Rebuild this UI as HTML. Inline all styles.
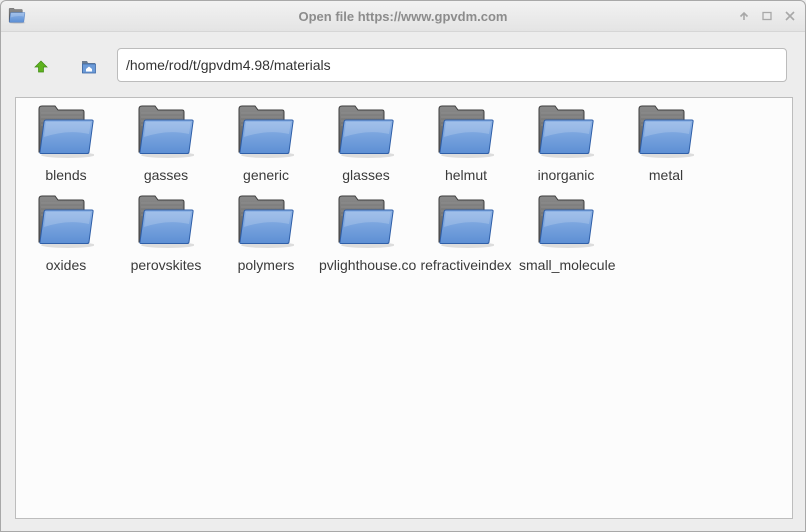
<!DOCTYPE html>
<html><head><style>
*{margin:0;padding:0;box-sizing:border-box}
body{width:806px;height:532px;overflow:hidden;background:#ededed;font-family:"Liberation Sans","DejaVu Sans",sans-serif;position:relative}
.win{position:absolute;left:0;top:0;width:806px;height:532px;border:1px solid #a8a8a8;border-radius:6px 6px 0 0;background:#ededed}
.title{position:absolute;left:0;top:0;width:804px;height:31px;background:linear-gradient(#f2f2f2,#e4e4e4);border-bottom:1px solid #d6d6d6;border-radius:6px 6px 0 0}
.title .t{position:absolute;left:0;right:0;top:8px;text-align:center;font-size:13px;font-weight:bold;color:#8c8c8c}
.path{position:absolute;left:116px;top:47px;width:670px;height:34px;background:#fff;border:1px solid #bcbcbc;border-radius:4px;font-size:14px;color:#333;padding:8px 0 0 8px}
.area{position:absolute;left:14px;top:96px;width:778px;height:422px;background:#fcfcfc;border:1px solid #bdbdbd}
.cell{position:absolute;width:100px;height:90px;overflow:hidden;text-align:center}
.cell svg{position:absolute;left:22px;top:7px}
.cell span{position:absolute;top:69px;left:0;width:100px;white-space:nowrap;font-size:14px;color:#3a3a3a;overflow:hidden}
</style></head><body>
<svg width="0" height="0" style="position:absolute">
<defs>
<linearGradient id="gb" x1="0" y1="0" x2="0" y2="1"><stop offset="0" stop-color="#8a8a8a"/><stop offset="1" stop-color="#555"/></linearGradient>
<linearGradient id="gf" x1="0" y1="0" x2="0" y2="1"><stop offset="0" stop-color="#8fb4e6"/><stop offset="1" stop-color="#5d8fd4"/></linearGradient>
<symbol id="fold" viewBox="0 0 56 54">
<ellipse cx="30" cy="50" rx="27" ry="3" fill="#000" opacity=".12"/>
<path d="M1 4 Q1 1 4 1 H17 L20 5 H44 Q46 5 46 7 V47 H1 Z" fill="url(#gb)" stroke="#3d3d3d" stroke-width="1"/>
<path d="M3 8 H44 M3 12 H44 M3 16 H44 M3 20 H44" stroke="#9a9a9a" stroke-width=".6"/>
<path d="M8 15 H54 Q55.5 15 55 17 L51 47 Q50.8 48.5 49 48.5 H3 Q1.5 48.5 2 47 L6 17 Q6.3 15 8 15 Z" fill="url(#gf)" stroke="#2f5fa8" stroke-width="1"/>
<path d="M8 17 H53 L51 29 Q30 24 6 32 Z" fill="#fff" opacity=".18"/>
</symbol>
</defs></svg>
<div class="win">
<div class="title">
<svg style="position:absolute;left:7px;top:7px" width="18" height="16" viewBox="0 0 56 54"><use href="#fold"/></svg>
<div class="t">Open file https://www.gpvdm.com</div>
<svg style="position:absolute;left:738px;top:10px" width="10" height="10"><path d="M5 9V2M1.5 5.5L5 2L8.5 5.5" stroke="#a8a8a8" stroke-width="1.6" fill="none"/></svg>
<svg style="position:absolute;left:761px;top:10px" width="10" height="10"><rect x="1" y="1.5" width="8" height="7" stroke="#a8a8a8" stroke-width="1.3" fill="none"/></svg>
<svg style="position:absolute;left:784px;top:10px" width="10" height="10"><path d="M1 1L9 9M9 1L1 9" stroke="#a8a8a8" stroke-width="1.6"/></svg>
</div>
<svg style="position:absolute;left:33px;top:59px" width="14" height="13"><path d="M7 1L13 7H9.5V12H4.5V7H1Z" fill="#5fb31f" stroke="#3f8a12" stroke-width=".7"/></svg>
<svg style="position:absolute;left:80px;top:58px" width="16" height="16" viewBox="0 0 16 16"><path d="M1 2H6L7 4H14V14H1Z" fill="#6b7d92"/><rect x="1.5" y="5" width="13" height="9" fill="#6c9bd8" stroke="#3e6aa8" stroke-width=".8"/><path d="M5 10L8 7.5L11 10V12.5H5Z" fill="#fff"/></svg>
<div class="path">/home/rod/t/gpvdm4.98/materials</div>
<div class="area">
<div class="cell" style="left:0;top:0"><svg width="56" height="54"><use href="#fold"/></svg><span>blends</span></div>
<div class="cell" style="left:100px;top:0"><svg width="56" height="54"><use href="#fold"/></svg><span>gasses</span></div>
<div class="cell" style="left:200px;top:0"><svg width="56" height="54"><use href="#fold"/></svg><span>generic</span></div>
<div class="cell" style="left:300px;top:0"><svg width="56" height="54"><use href="#fold"/></svg><span>glasses</span></div>
<div class="cell" style="left:400px;top:0"><svg width="56" height="54"><use href="#fold"/></svg><span>helmut</span></div>
<div class="cell" style="left:500px;top:0"><svg width="56" height="54"><use href="#fold"/></svg><span>inorganic</span></div>
<div class="cell" style="left:600px;top:0"><svg width="56" height="54"><use href="#fold"/></svg><span>metal</span></div>
<div class="cell" style="left:0;top:90px"><svg width="56" height="54"><use href="#fold"/></svg><span>oxides</span></div>
<div class="cell" style="left:100px;top:90px"><svg width="56" height="54"><use href="#fold"/></svg><span>perovskites</span></div>
<div class="cell" style="left:200px;top:90px"><svg width="56" height="54"><use href="#fold"/></svg><span>polymers</span></div>
<div class="cell" style="left:300px;top:90px"><svg width="56" height="54"><use href="#fold"/></svg><span style="text-align:left;left:3px">pvlighthouse.com</span></div>
<div class="cell" style="left:400px;top:90px"><svg width="56" height="54"><use href="#fold"/></svg><span>refractiveindex</span></div>
<div class="cell" style="left:500px;top:90px"><svg width="56" height="54"><use href="#fold"/></svg><span style="text-align:left;left:3px">small_molecules</span></div>
</div>
</div>
</body></html>
